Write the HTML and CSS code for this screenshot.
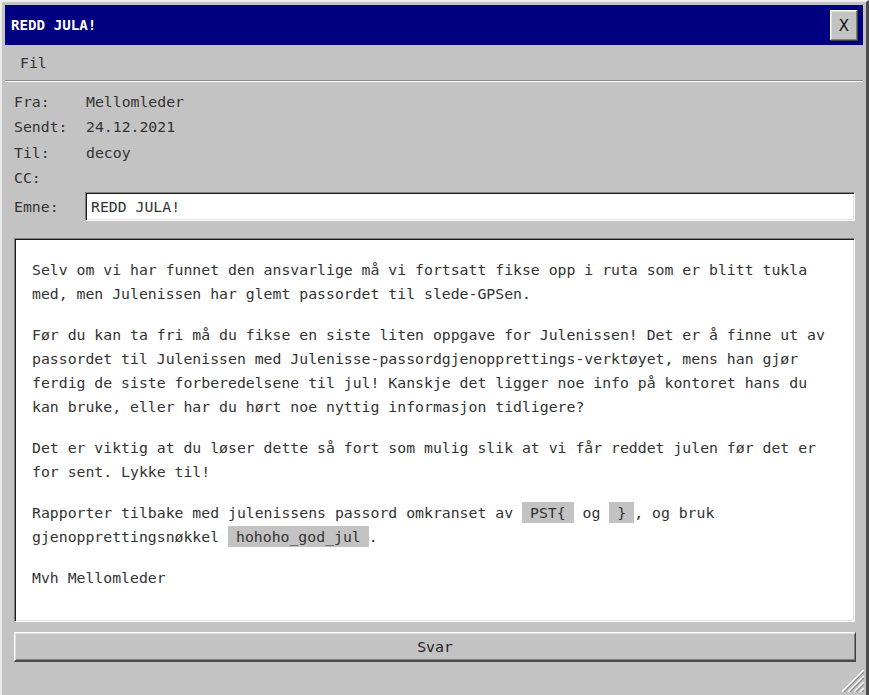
FILE: index.html
```html
<!DOCTYPE html>
<html lang="no">
<head>
<meta charset="utf-8">
<title>REDD JULA!</title>
<link rel="stylesheet" href="styles.css">
</head>
<body>
<div class="window">
  <div class="titlebar">
    <span class="title">REDD JULA!</span>
    <button class="close">X</button>
  </div>
  <div class="menubar"><span class="menu-item">Fil</span></div>
  <div class="content">
    <div class="fields">
      <div class="field"><span class="label">Fra:</span><span class="value">Mellomleder</span></div>
      <div class="field"><span class="label">Sendt:</span><span class="value">24.12.2021</span></div>
      <div class="field"><span class="label">Til:</span><span class="value">decoy</span></div>
      <div class="field"><span class="label">CC:</span><span class="value"></span></div>
      <div class="field subject"><span class="label">Emne:</span><div class="input">REDD JULA!</div></div>
    </div>
    <div class="message">
      <p>Selv om vi har funnet den ansvarlige må vi fortsatt fikse opp i ruta som er blitt tukla med, men Julenissen har glemt passordet til slede-GPSen.</p>
      <p>Før du kan ta fri må du fikse en siste liten oppgave for Julenissen! Det er å finne ut av passordet til Julenissen med Julenisse-passordgjenopprettings-verktøyet, mens han gjør ferdig de siste forberedelsene til jul! Kanskje det ligger noe info på kontoret hans du kan bruke, eller har du hørt noe nyttig informasjon tidligere?</p>
      <p>Det er viktig at du løser dette så fort som mulig slik at vi får reddet julen før det er for sent. Lykke til!</p>
      <p>Rapporter tilbake med julenissens passord omkranset av <code class="code">PST{</code> og <code class="code">}</code>, og bruk gjenopprettingsnøkkel <code class="code">hohoho_god_jul</code>.</p>
      <p>Mvh Mellomleder</p>
    </div>
    <button class="reply">Svar</button>
  </div>
  <svg class="grip" width="22" height="22" viewBox="0 0 22 22">
    <path d="M22 0 L0 22 M22 6 L6 22 M22 12 L12 22 M22 18 L18 22" stroke="#ffffff" stroke-width="1.6" fill="none"/>
    <path d="M22 2 L2 22 M22 8 L8 22 M22 14 L14 22 M22 20 L20 22" stroke="#8a8a8a" stroke-width="1.2" fill="none"/>
  </svg>
</div>
</body>
</html>
```
FILE: styles.css
```css
html, body {
  margin: 0;
  height: 100%;
}

body {
  background: #c3c3c3;
  font-family: "DejaVu Sans Mono", "Liberation Mono", monospace;
  font-size: 14.8px;
  color: #333;
  overflow: hidden;
}

.window {
  box-sizing: border-box;
  width: 869px;
  height: 695px;
  background: #c3c3c3;
  border-left: 2px solid #ececec;
  border-top: 2px solid #ececec;
  border-right: 3px solid #4a4a4a;
  padding: 3px 3px 0 3px;
  position: relative;
  display: flex;
  flex-direction: column;
}

.titlebar {
  height: 40px;
  background: #000080;
  display: flex;
  align-items: center;
  justify-content: space-between;
  padding: 0 5px 0 6px;
}

.title {
  color: #fff;
  font-weight: bold;
  font-size: 14.2px;
}

.close {
  width: 28px;
  height: 31px;
  margin-top: 1px;
  padding: 0;
  border: none;
  background: #c3c3c3;
  box-shadow: inset -1px -1px #404040, inset 1px 1px #ffffff, inset -2px -2px #808080, inset 2px 2px #dfdfdf;
  font-family: "DejaVu Sans", sans-serif;
  font-size: 15px;
  color: #111;
}

.menubar {
  height: 35px;
  display: flex;
  align-items: center;
  padding-left: 15px;
  border-bottom: 1px solid #8a8a8a;
}

.content {
  flex: 1;
  display: flex;
  flex-direction: column;
  padding: 7px 8px 0 9px;
  border-top: 1px solid #ffffff;
}

.field {
  display: flex;
  align-items: center;
  height: 25.3px;
}

.label {
  width: 71px;
  flex: none;
}

.value {
  padding-left: 1px;
}

.field.subject {
  height: auto;
  margin-top: 2px;
}

.input {
  flex: 1;
  height: 29px;
  box-sizing: border-box;
  background: #fff;
  display: flex;
  align-items: center;
  padding-left: 5px;
  border-top: 1px solid #808080;
  border-left: 1px solid #808080;
  border-right: 1px solid #ffffff;
  border-bottom: 1px solid #ffffff;
  box-shadow: inset 1px 1px #1a1a1a, inset -1px -1px #dfdfdf;
}

.message {
  flex: 1;
  margin-top: 17px;
  background: #fff;
  padding: 19px 20px 0 17px;
  border-top: 1px solid #808080;
  border-left: 1px solid #808080;
  border-right: 1px solid #ffffff;
  border-bottom: 1px solid #ffffff;
  box-shadow: inset 1px 1px #1a1a1a, inset -1px -1px #dfdfdf;
  line-height: 24px;
}

.message p {
  margin: 0 0 17px 0;
}

.code {
  font-family: inherit;
  font-size: inherit;
  background: #c3c3c3;
  padding: 2px 8px;
}

.reply {
  height: 30px;
  margin: 10px -1px 33px 0;
  padding: 0;
  background: #c3c3c3;
  border: none;
  border-top: 1px solid #ffffff;
  border-left: 1px solid #ffffff;
  border-right: 1px solid #404040;
  border-bottom: 2px solid #4a4a4a;
  box-shadow: inset 1px 1px #dfdfdf, inset -1px -1px #808080;
  font-family: inherit;
  font-size: 14.8px;
  color: #222;
}

.grip {
  position: absolute;
  right: 2px;
  bottom: 3px;
}
```
